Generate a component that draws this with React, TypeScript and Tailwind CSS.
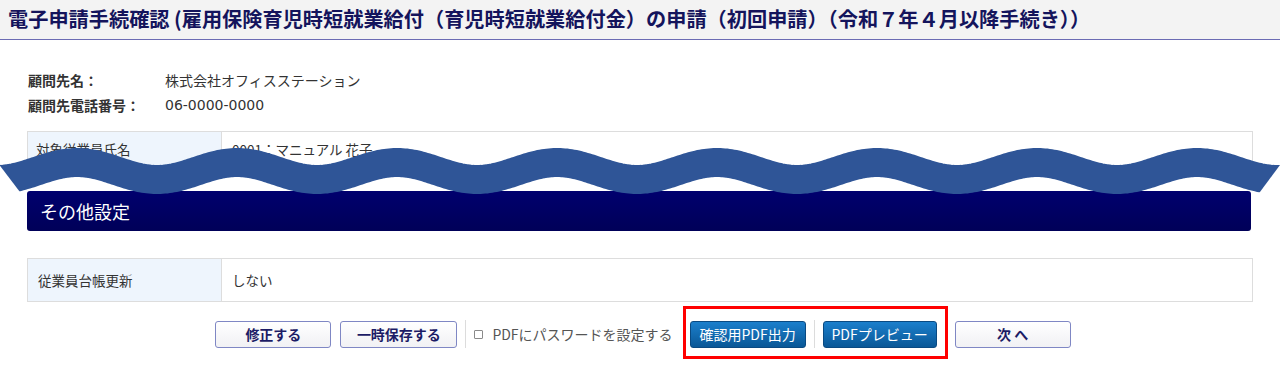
import React from "react";

const FONT = { fontFamily: '"Noto Sans CJK JP", "Noto Sans", sans-serif' };

function Wave() {
  const pts: string[] = [];
  for (let x = -40; x <= 1320; x += 2) {
    const y = 171 - 8.5 * Math.cos((2 * Math.PI * (x - 77)) / 160);
    pts.push(`${x === -40 ? "M" : "L"}${x},${y.toFixed(2)}`);
  }
  return (
    <svg
      className="absolute left-0 top-0 pointer-events-none"
      width={1280}
      height={368}
      viewBox="0 0 1280 368"
    >
      <defs>
        <clipPath id="waveclip">
          <polygon points="-19.5,140 1298.5,140 1254,200 26,200" />
        </clipPath>
      </defs>
      <path
        d={pts.join(" ")}
        fill="none"
        stroke="#2f5597"
        strokeWidth={29}
        clipPath="url(#waveclip)"
      />
    </svg>
  );
}

function WhiteButton({ label, w }: { label: string; w: string }) {
  return (
    <button
      className={`${w} h-[27px] rounded-[3px] border border-[#7f87c4] bg-linear-to-b from-white to-[#f1f1f4] text-[14px] font-bold text-[#1c1c66] flex items-center justify-center`}
    >
      {label}
    </button>
  );
}

function BlueButton({ label, w }: { label: string; w: string }) {
  return (
    <button
      className={`${w} h-[27px] rounded-[3px] border border-[#0a4a82] bg-linear-to-b from-[#1b7fcc] to-[#0a5897] text-[14px] text-white flex items-center justify-center`}
    >
      {label}
    </button>
  );
}

export default function App() {
  return (
    <div className="relative w-[1280px] h-[368px] bg-white overflow-hidden" style={FONT}>
      <div className="h-[40px] bg-[#f3f3f3] border-b border-[#6b6bb3] flex items-center pl-[8px]">
        <h1 className="text-[20.2px] font-bold text-[#14145c] leading-none whitespace-nowrap">
          電子申請手続確認 (雇用保険育児時短就業給付（育児時短就業給付金）の申請（初回申請）（令和７年４月以降手続き））
        </h1>
      </div>

      <div className="px-[27px]">
        <div className="pt-[33px] flex flex-col gap-[11px] text-[14px] leading-[14px]">
          <div className="flex">
            <span className="w-[138px] pl-[1px] font-bold text-[#333]">顧問先名：</span>
            <span className="text-[#333]">株式会社オフィスステーション</span>
          </div>
          <div className="flex">
            <span className="w-[138px] pl-[1px] font-bold text-[#333]">顧問先電話番号：</span>
            <span className="text-[#333]" style={{ fontFamily: '"DejaVu Sans", sans-serif' }}>
              06-0000-0000
            </span>
          </div>
        </div>

        <div className="mt-[19px] border border-[#dddddd] flex h-[36px] text-[13.5px] text-[#333]">
          <div className="w-[194px] bg-[#eef5fd] border-r border-[#dddddd] flex items-center pl-[8px]">
            対象従業員氏名
          </div>
          <div className="flex-1 flex items-center pl-[10px]">0001：マニュアル 花子</div>
        </div>

        <div className="mt-[24px] mr-[2px] h-[40px] rounded-[3px] bg-linear-to-b from-[#00006e] to-[#000058] flex items-center pl-[13px] text-[18px] text-white">
          その他設定
        </div>

        <div className="mt-[27px] border border-[#dddddd] flex h-[44px] text-[13.5px] text-[#333]">
          <div className="w-[194px] bg-[#eef5fd] border-r border-[#dddddd] flex items-center pl-[10px]">
            従業員台帳更新
          </div>
          <div className="flex-1 flex items-center pl-[10px]">しない</div>
        </div>

        <div className="mt-[18px] flex items-center justify-center pl-[6px]">
          <WhiteButton label="修正する" w="w-[116px]" />
          <div className="ml-[9px]">
            <WhiteButton label="一時保存する" w="w-[117px]" />
          </div>
          <div className="mx-[8px] w-px h-[28px] bg-[#dcdcdc]" />
          <label className="flex items-center text-[14px] text-[#555]">
            <span className="w-[9px] h-[9px] border border-[#8a8a8a] rounded-[1px] mr-[9px]" />
            PDFにパスワードを設定する
          </label>
          <div className="relative ml-[17px] flex items-center">
            <BlueButton label="確認用PDF出力" w="w-[116px]" />
            <div className="mx-[8px] w-px h-[28px] bg-[#dcdcdc]" />
            <BlueButton label="PDFプレビュー" w="w-[114px]" />
            <div className="absolute left-[-7px] right-[-11px] top-[-14px] bottom-[-11px] border-[3px] border-[#ff0000] pointer-events-none" />
          </div>
          <div className="ml-[18px]">
            <WhiteButton label="次 へ" w="w-[116px]" />
          </div>
        </div>
      </div>

      <Wave />
    </div>
  );
}
